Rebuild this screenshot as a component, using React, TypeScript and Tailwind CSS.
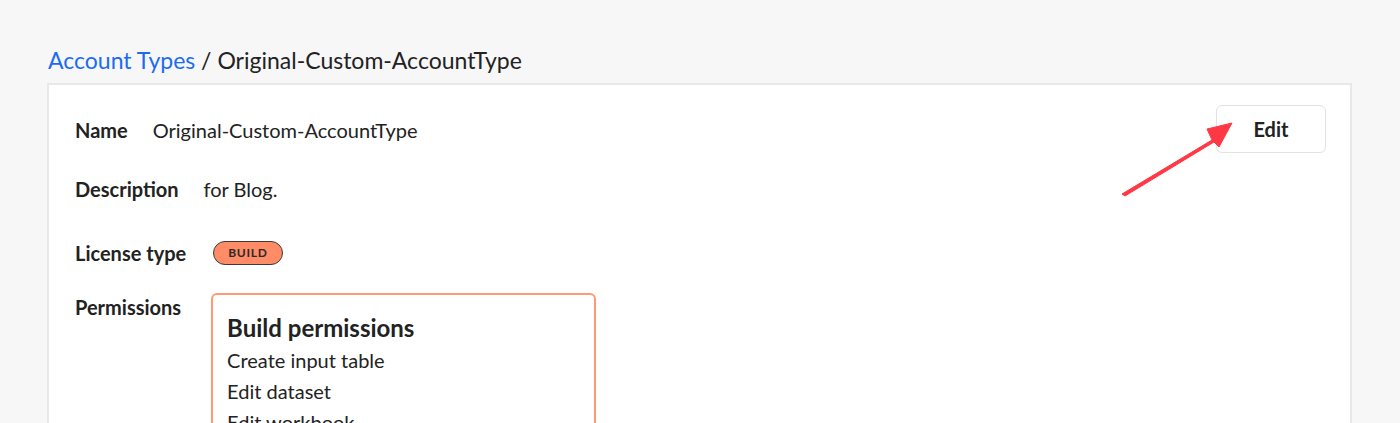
import React from "react";

const font = { fontFamily: "Lato, 'Noto Sans', sans-serif" };

function Arrow() {
  return (
    <svg
      className="absolute left-0 top-0 pointer-events-none"
      width="1400"
      height="423"
      viewBox="0 0 1400 423"
    >
      <polygon
        points="1122,194 1212,140 1207,129 1232,123 1219,147 1214,142 1125,196"
        fill="#ff3845"
        strokeLinejoin="round"
        stroke="#ff3845"
        strokeWidth="1"
      />
    </svg>
  );
}

export default function App() {
  return (
    <div
      className="relative w-[1400px] h-[423px] overflow-hidden bg-[#f7f7f7] text-[#222]"
      style={font}
    >
      <div className="pt-[45px] pl-[48px] text-[23px] leading-[30px]">
        <span className="text-[#1b6cf2]">Account Types</span>
        <span> / Original-Custom-AccountType</span>
      </div>
      <div className="mt-[8px] ml-[47px] mr-[48px] h-[400px] bg-white border-2 border-[#e8e8e8] border-b-0 pl-[26px] pr-[24px] pt-[19px]">
        <div className="flex items-start justify-between">
          <div className="flex flex-col">
            <div className="flex items-center gap-[25px] mt-[13px] text-[20px] leading-[26px]">
              <span className="font-bold">Name</span>
              <span>Original-Custom-AccountType</span>
            </div>
            <div className="flex items-center gap-[25px] mt-[33px] text-[20px] leading-[26px]">
              <span className="font-bold">Description</span>
              <span>for Blog.</span>
            </div>
            <div className="flex items-center gap-[27px] mt-[38px] text-[20px] leading-[26px]">
              <span className="font-bold">License type</span>
              <span className="inline-flex items-center h-[24px] px-[14px] rounded-full bg-[#ff8c67] border border-[#3a3a3a] text-[12px] font-bold tracking-[0.06em] text-[#2a2a2a]">
                BUILD
              </span>
            </div>
            <div className="flex items-start gap-[30px] mt-[27px]">
              <span className="font-bold text-[20px] leading-[26px] mt-[1px]">Permissions</span>
              <div className="w-[385px] h-[200px] border-[2.5px] border-[#ff9a74] rounded-[6px] px-[14px] pt-[18px]">
                <div className="text-[24px] leading-[30px] font-bold">Build permissions</div>
                <div className="text-[20px] leading-[31px] mt-[2px]">
                  <div>Create input table</div>
                  <div>Edit dataset</div>
                  <div>Edit workbook</div>
                </div>
              </div>
            </div>
          </div>
          <button className="w-[110px] h-[48px] mt-[1px] rounded-[6px] border border-[#e2e2e2] bg-white text-[20px] font-bold text-[#222]">
            Edit
          </button>
        </div>
      </div>
      <Arrow />
    </div>
  );
}
